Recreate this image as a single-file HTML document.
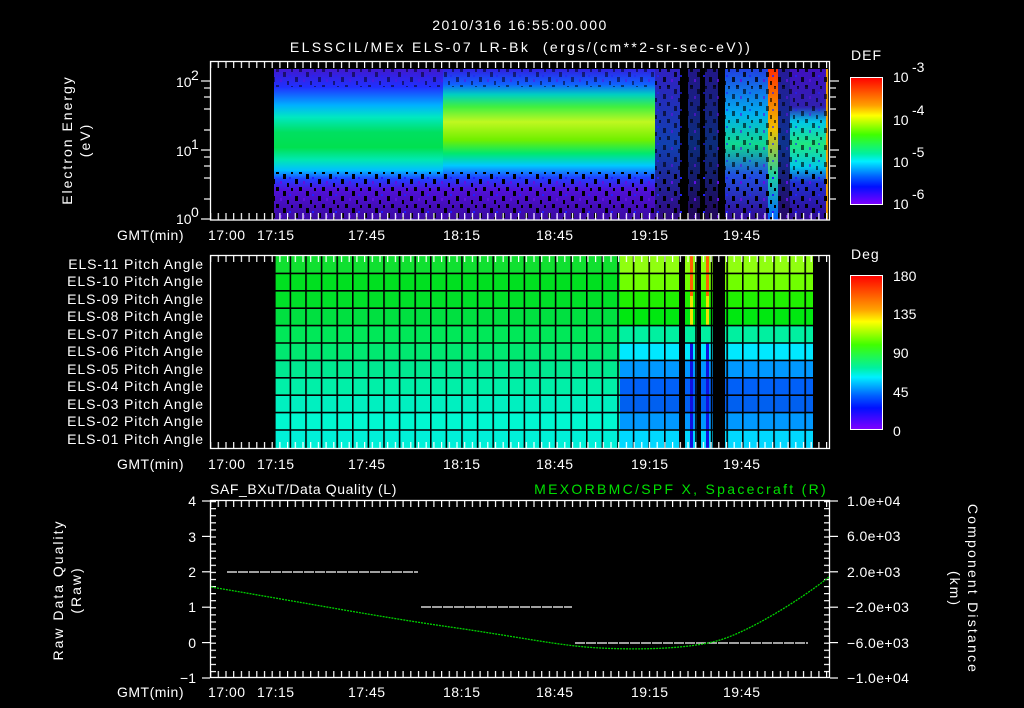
<!DOCTYPE html>
<html><head><meta charset="utf-8"><style>
html,body{margin:0;padding:0;background:#000;}
svg{display:block}
text{font-family:"Liberation Sans",sans-serif;fill:#fff;font-size:14px}
</style></head><body>
<svg width="1024" height="708" viewBox="0 0 1024 708" xmlns="http://www.w3.org/2000/svg">
<defs>
<linearGradient id="gA" x1="0" y1="69" x2="0" y2="220" gradientUnits="userSpaceOnUse">
<stop offset="0" stop-color="#4018d0"/><stop offset="0.12" stop-color="#2030ff"/><stop offset="0.24" stop-color="#00b0ff"/><stop offset="0.32" stop-color="#00e8c0"/><stop offset="0.42" stop-color="#00e060"/><stop offset="0.52" stop-color="#00e050"/><stop offset="0.6" stop-color="#00e8b0"/><stop offset="0.67" stop-color="#00c0ff"/><stop offset="0.73" stop-color="#2040ff"/><stop offset="0.8" stop-color="#5010d8"/><stop offset="1" stop-color="#3a0aa0"/></linearGradient>
<linearGradient id="gB" x1="0" y1="69" x2="0" y2="220" gradientUnits="userSpaceOnUse">
<stop offset="0" stop-color="#3020e0"/><stop offset="0.1" stop-color="#1060ff"/><stop offset="0.17" stop-color="#00d0c0"/><stop offset="0.25" stop-color="#40f040"/><stop offset="0.35" stop-color="#c0f820"/><stop offset="0.47" stop-color="#70f000"/><stop offset="0.56" stop-color="#00e870"/><stop offset="0.64" stop-color="#00c8ff"/><stop offset="0.72" stop-color="#2040ff"/><stop offset="0.8" stop-color="#5010d8"/><stop offset="1" stop-color="#3a0aa0"/></linearGradient>
<linearGradient id="gS" x1="0" y1="69" x2="0" y2="220" gradientUnits="userSpaceOnUse">
<stop offset="0" stop-color="#3020c0"/><stop offset="0.5" stop-color="#1040b0"/><stop offset="1" stop-color="#300880"/></linearGradient>
<linearGradient id="gE" x1="0" y1="69" x2="0" y2="220" gradientUnits="userSpaceOnUse">
<stop offset="0" stop-color="#4010c0"/><stop offset="0.25" stop-color="#3020b0"/><stop offset="0.35" stop-color="#00c8e8"/><stop offset="0.5" stop-color="#20e880"/><stop offset="0.65" stop-color="#00c8e8"/><stop offset="0.75" stop-color="#2030d0"/><stop offset="1" stop-color="#300890"/></linearGradient>
<linearGradient id="gR" x1="0" y1="69" x2="0" y2="220" gradientUnits="userSpaceOnUse">
<stop offset="0" stop-color="#ff3000"/><stop offset="0.4" stop-color="#f0c000"/><stop offset="0.7" stop-color="#20d0a0"/><stop offset="1" stop-color="#0060ff"/></linearGradient>
<linearGradient id="gM" x1="0" y1="69" x2="0" y2="220" gradientUnits="userSpaceOnUse">
<stop offset="0" stop-color="#2040e0"/><stop offset="0.3" stop-color="#00b0f0"/><stop offset="0.5" stop-color="#10d890"/><stop offset="0.7" stop-color="#2050e0"/><stop offset="1" stop-color="#300890"/></linearGradient>
<linearGradient id="cb" x1="0" y1="0" x2="0" y2="1">
<stop offset="0" stop-color="#ff0000"/><stop offset="0.22" stop-color="#ffa000"/><stop offset="0.3" stop-color="#ffff00"/><stop offset="0.45" stop-color="#40ff00"/><stop offset="0.6" stop-color="#00f0a0"/><stop offset="0.66" stop-color="#00f0ff"/><stop offset="0.78" stop-color="#0060ff"/><stop offset="0.86" stop-color="#0010ff"/><stop offset="1" stop-color="#8000ff"/></linearGradient>
<pattern id="tkB" x="210" y="0" width="7.7" height="708" patternUnits="userSpaceOnUse"><rect x="0" y="0" width="1.2" height="708" fill="#fff"/></pattern>
<pattern id="tkY" x="0" y="501" width="1024" height="7.08" patternUnits="userSpaceOnUse"><rect x="0" y="0" width="1024" height="1.2" fill="#fff"/></pattern>
<pattern id="noise" x="0" y="0" width="23" height="17" patternUnits="userSpaceOnUse">
<rect x="0" y="0" width="3" height="4" fill="#000"/><rect x="7" y="4" width="3" height="5" fill="#000"/><rect x="15" y="1" width="2" height="3" fill="#000"/><rect x="4" y="11" width="2" height="3" fill="#6010e0"/><rect x="19" y="9" width="3" height="5" fill="#000"/><rect x="11" y="13" width="2" height="4" fill="#000"/><rect x="13" y="7" width="2" height="2" fill="#2020ff"/></pattern>
<pattern id="vg" x="274" y="0" width="15.6" height="708" patternUnits="userSpaceOnUse"><rect x="0" y="0" width="1.6" height="708" fill="#000"/></pattern>
</defs>

<text x="520" y="30" text-anchor="middle" font-size="18" letter-spacing="1.5">2010/316 16:55:00.000</text>
<text x="521" y="52" text-anchor="middle" font-size="17" letter-spacing="2.4" xml:space="preserve">ELSSCIL/MEx ELS-07 LR-Bk  (ergs/(cm**2-sr-sec-eV))</text>

<rect x="274" y="69" width="169" height="151" fill="url(#gA)"/>
<rect x="443" y="69" width="212" height="151" fill="url(#gB)"/>
<rect x="655" y="69" width="25" height="151" fill="url(#gS)"/>
<rect x="688" y="69" width="12" height="151" fill="url(#gS)" opacity="0.7"/>
<rect x="705" y="69" width="13" height="151" fill="url(#gS)" opacity="0.7"/>
<rect x="725" y="69" width="43" height="151" fill="url(#gM)"/>
<rect x="768" y="69" width="10" height="151" fill="url(#gR)"/>
<rect x="778" y="69" width="12" height="151" fill="url(#gS)" opacity="0.8"/>
<rect x="790" y="69" width="38" height="151" fill="url(#gE)"/>
<rect x="826" y="69" width="2" height="151" fill="#f0a000"/>
<rect x="274" y="172" width="554" height="48" fill="url(#noise)"/>
<rect x="274" y="69" width="554" height="18" fill="url(#noise)" opacity="0.5"/>
<rect x="655" y="69" width="173" height="151" fill="url(#noise)" opacity="0.6"/>
<rect x="210" y="61" width="620" height="7" fill="url(#tkB)"/>
<rect x="210" y="213" width="620" height="7" fill="url(#tkB)"/>
<rect x="210.5" y="61.5" width="619" height="158.5" fill="none" stroke="#fff" stroke-width="1.3"/>
<g stroke="#fff" stroke-width="1.2">
<line x1="201" y1="81" x2="210" y2="81"/><line x1="201" y1="150" x2="210" y2="150"/><line x1="201" y1="219" x2="210" y2="219"/>
<line x1="204" y1="88" x2="210" y2="88"/><line x1="204" y1="97" x2="210" y2="97"/><line x1="204" y1="109" x2="210" y2="109"/><line x1="204" y1="130" x2="210" y2="130"/>
<line x1="204" y1="157" x2="210" y2="157"/><line x1="204" y1="166" x2="210" y2="166"/><line x1="204" y1="178" x2="210" y2="178"/><line x1="204" y1="199" x2="210" y2="199"/>
<line x1="830" y1="81" x2="839" y2="81"/><line x1="830" y1="150" x2="839" y2="150"/>
<line x1="830" y1="88" x2="836" y2="88"/><line x1="830" y1="97" x2="836" y2="97"/><line x1="830" y1="109" x2="836" y2="109"/><line x1="830" y1="130" x2="836" y2="130"/>
<line x1="830" y1="157" x2="836" y2="157"/><line x1="830" y1="166" x2="836" y2="166"/><line x1="830" y1="178" x2="836" y2="178"/><line x1="830" y1="199" x2="836" y2="199"/>
</g>
<text x="176" y="87" font-size="13">10</text><text x="191" y="80" font-size="9">2</text>
<text x="176" y="156" font-size="13">10</text><text x="191" y="149" font-size="9">1</text>
<text x="176" y="224" font-size="13">10</text><text x="191" y="217" font-size="9">0</text>
<text transform="translate(72,140) rotate(-90)" text-anchor="middle" font-size="15" letter-spacing="2">Electron Energy</text>
<text transform="translate(90,140) rotate(-90)" text-anchor="middle" font-size="15" letter-spacing="2">(eV)</text>
<g font-size="13" letter-spacing="0.5">
<text x="117" y="240">GMT(min)</text>
<text x="208" y="240">17:00</text><text x="257" y="240">17:15</text><text x="348" y="240">17:45</text><text x="443" y="240">18:15</text><text x="536" y="240">18:45</text><text x="631" y="240">19:15</text><text x="723" y="240">19:45</text>
</g>
<text x="851" y="60" font-size="16" letter-spacing="1">DEF</text>
<rect x="850.5" y="77.5" width="32" height="127" fill="url(#cb)" stroke="#fff"/>
<g font-size="16"><text x="893" y="82">10</text><text x="893" y="125">10</text><text x="893" y="167">10</text><text x="893" y="209">10</text></g>
<g font-size="11"><text x="912" y="72">-3</text><text x="912" y="115">-4</text><text x="912" y="157">-5</text><text x="912" y="199">-6</text></g>

<g>
<rect x="274" y="256" width="346" height="17.4" fill="#10e030"/>
<rect x="274" y="273.4" width="346" height="17.4" fill="#00e020"/>
<rect x="274" y="290.8" width="346" height="17.4" fill="#00e028"/>
<rect x="274" y="308.2" width="346" height="17.4" fill="#00e040"/>
<rect x="274" y="325.6" width="346" height="17.4" fill="#00e858"/>
<rect x="274" y="343" width="346" height="17.4" fill="#00e870"/>
<rect x="274" y="360.4" width="346" height="17.4" fill="#00e890"/>
<rect x="274" y="377.8" width="346" height="17.4" fill="#00f0a8"/>
<rect x="274" y="395.2" width="346" height="17.4" fill="#00f0c0"/>
<rect x="274" y="412.6" width="346" height="17.4" fill="#00f8d0"/>
<rect x="274" y="430" width="346" height="18" fill="#00f0d8"/>
</g>
<g>
<rect x="620" y="256" width="193" height="17.4" fill="#90ff10"/>
<rect x="620" y="273.4" width="193" height="17.4" fill="#70ff00"/>
<rect x="620" y="290.8" width="193" height="17.4" fill="#20f000"/>
<rect x="620" y="308.2" width="193" height="17.4" fill="#00e810"/>
<rect x="620" y="325.6" width="193" height="17.4" fill="#00f0a0"/>
<rect x="620" y="343" width="193" height="17.4" fill="#00e8ff"/>
<rect x="620" y="360.4" width="193" height="17.4" fill="#0098ff"/>
<rect x="620" y="377.8" width="193" height="17.4" fill="#0060f8"/>
<rect x="620" y="395.2" width="193" height="17.4" fill="#0060f0"/>
<rect x="620" y="412.6" width="193" height="17.4" fill="#0098ff"/>
<rect x="620" y="430" width="193" height="18" fill="#00d8ff"/>
</g>
<rect x="690" y="256" width="3" height="40" fill="#ff6000"/><rect x="690" y="296" width="3" height="30" fill="#f0e000"/><rect x="690" y="343" width="3" height="105" fill="#1010e0"/>
<rect x="706" y="256" width="3" height="40" fill="#ff6000"/><rect x="706" y="296" width="3" height="30" fill="#f0e000"/><rect x="706" y="343" width="3" height="105" fill="#1010e0"/>
<rect x="679" y="256" width="6" height="192" fill="#000"/>
<rect x="697" y="256" width="4" height="192" fill="#000"/>
<rect x="713" y="256" width="12" height="192" fill="#000"/>
<rect x="274" y="256" width="539" height="192" fill="url(#vg)"/>
<g stroke="#000" stroke-width="1.6">
<line x1="274" y1="273.4" x2="813" y2="273.4"/><line x1="274" y1="290.8" x2="813" y2="290.8"/><line x1="274" y1="308.2" x2="813" y2="308.2"/><line x1="274" y1="325.6" x2="813" y2="325.6"/><line x1="274" y1="343" x2="813" y2="343"/><line x1="274" y1="360.4" x2="813" y2="360.4"/><line x1="274" y1="377.8" x2="813" y2="377.8"/><line x1="274" y1="395.2" x2="813" y2="395.2"/><line x1="274" y1="412.6" x2="813" y2="412.6"/><line x1="274" y1="430" x2="813" y2="430"/>
</g>
<rect x="210" y="255" width="620" height="7" fill="url(#tkB)"/>
<rect x="210" y="442" width="620" height="7" fill="url(#tkB)"/>
<rect x="210.5" y="255.5" width="619" height="193" fill="none" stroke="#fff" stroke-width="1.3"/>
<g font-size="12.5" text-anchor="end" letter-spacing="0.9">
<text x="204" y="269">ELS-11 Pitch Angle</text><text x="204" y="286">ELS-10 Pitch Angle</text><text x="204" y="304">ELS-09 Pitch Angle</text><text x="204" y="321">ELS-08 Pitch Angle</text><text x="204" y="339">ELS-07 Pitch Angle</text><text x="204" y="356">ELS-06 Pitch Angle</text><text x="204" y="374">ELS-05 Pitch Angle</text><text x="204" y="391">ELS-04 Pitch Angle</text><text x="204" y="409">ELS-03 Pitch Angle</text><text x="204" y="426">ELS-02 Pitch Angle</text><text x="204" y="444">ELS-01 Pitch Angle</text>
</g>
<g font-size="13" letter-spacing="0.5">
<text x="117" y="469">GMT(min)</text>
<text x="208" y="469">17:00</text><text x="257" y="469">17:15</text><text x="348" y="469">17:45</text><text x="443" y="469">18:15</text><text x="536" y="469">18:45</text><text x="631" y="469">19:15</text><text x="723" y="469">19:45</text>
</g>
<text x="851" y="259" font-size="16" letter-spacing="1">Deg</text>
<rect x="850.5" y="275.5" width="32" height="154" fill="url(#cb)" stroke="#fff"/>
<g font-size="16"><text x="893" y="281">180</text><text x="893" y="319">135</text><text x="893" y="358">90</text><text x="893" y="397">45</text><text x="893" y="436">0</text></g>

<text x="210" y="494" font-size="15" letter-spacing="0.6">SAF_BXuT/Data Quality (L)</text>
<text x="828" y="494" font-size="15" text-anchor="end" letter-spacing="2.3" style="fill:#00e000">MEXORBMC/SPF X, Spacecraft (R)</text>
<rect x="210" y="500" width="620" height="7" fill="url(#tkB)"/>
<rect x="210" y="671" width="620" height="7" fill="url(#tkB)"/>
<rect x="210" y="501" width="6" height="177" fill="url(#tkY)"/>
<rect x="824" y="501" width="6" height="177" fill="url(#tkY)"/>
<rect x="210.5" y="500.5" width="619" height="177" fill="none" stroke="#fff" stroke-width="1.3"/>
<g stroke="#fff" stroke-width="1.2">
<line x1="202" y1="501" x2="210" y2="501"/><line x1="202" y1="536.4" x2="210" y2="536.4"/><line x1="202" y1="571.8" x2="210" y2="571.8"/><line x1="202" y1="607.2" x2="210" y2="607.2"/><line x1="202" y1="642.6" x2="210" y2="642.6"/><line x1="202" y1="678" x2="210" y2="678"/>
<line x1="830" y1="501" x2="838" y2="501"/><line x1="830" y1="536.4" x2="838" y2="536.4"/><line x1="830" y1="571.8" x2="838" y2="571.8"/><line x1="830" y1="607.2" x2="838" y2="607.2"/><line x1="830" y1="642.6" x2="838" y2="642.6"/><line x1="830" y1="678" x2="838" y2="678"/>
</g>
<g font-size="13" text-anchor="end">
<text x="196" y="506">4</text><text x="196" y="542">3</text><text x="196" y="577">2</text><text x="196" y="612">1</text><text x="196" y="648">0</text><text x="196" y="683">−1</text>
</g>
<g font-size="12" letter-spacing="0.4">
<text x="847" y="506">1.0e+04</text><text x="847" y="541">6.0e+03</text><text x="847" y="577">2.0e+03</text><text x="847" y="612">−2.0e+03</text><text x="847" y="648">−6.0e+03</text><text x="847" y="683">−1.0e+04</text>
</g>
<text transform="translate(63,590) rotate(-90)" text-anchor="middle" font-size="15" letter-spacing="2">Raw Data Quality</text>
<text transform="translate(81,590) rotate(-90)" text-anchor="middle" font-size="15" letter-spacing="2">(Raw)</text>
<text transform="translate(968,589) rotate(90)" text-anchor="middle" font-size="15" letter-spacing="2.2">Component Distance</text>
<text transform="translate(950,589) rotate(90)" text-anchor="middle" font-size="15" letter-spacing="2">(km)</text>
<g stroke="#fff" stroke-width="1.3" stroke-dasharray="10 1">
<line x1="227" y1="572" x2="418" y2="572"/>
<line x1="421" y1="607" x2="572" y2="607"/>
<line x1="575" y1="643" x2="808" y2="643"/>
</g>
<path d="M211 587 C 300 602, 380 617, 450 627 S 560 646, 600 648 C 640 650, 690 649, 720 640 S 800 600, 829 577" fill="none" stroke="#00d000" stroke-width="1.3" stroke-dasharray="2 1"/>
<g font-size="13" letter-spacing="0.5">
<text x="117" y="697">GMT(min)</text>
<text x="208" y="697">17:00</text><text x="257" y="697">17:15</text><text x="348" y="697">17:45</text><text x="443" y="697">18:15</text><text x="536" y="697">18:45</text><text x="631" y="697">19:15</text><text x="723" y="697">19:45</text>
</g>
</svg>
</body></html>
